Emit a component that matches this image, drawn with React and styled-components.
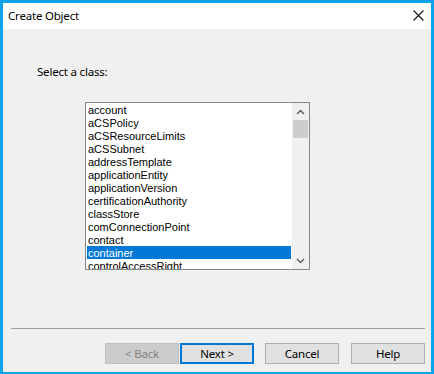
import React from "react";
import styled, { createGlobalStyle } from "styled-components";

const GlobalStyle = createGlobalStyle`
  html, body {
    margin: 0;
    padding: 0;
    background: #f0f0f0;
  }
  * {
    box-sizing: border-box;
  }
`;

const classes = [
  "account",
  "aCSPolicy",
  "aCSResourceLimits",
  "aCSSubnet",
  "addressTemplate",
  "applicationEntity",
  "applicationVersion",
  "certificationAuthority",
  "classStore",
  "comConnectionPoint",
  "contact",
  "container",
  "controlAccessRight",
];

const App = () => {
  return (
    <>
      <GlobalStyle />
      <Window>
        <TitleBar>
          <Title>Create Object</Title>
          <CloseButton>
            <svg width="11" height="11" viewBox="0 0 11 11">
              <path d="M0.5 0.5 L10.5 10.5 M10.5 0.5 L0.5 10.5" stroke="#111" strokeWidth="1.1" />
            </svg>
          </CloseButton>
        </TitleBar>
        <Body>
          <Label>Select a class:</Label>
          <ListBox>
            <Items>
              {classes.map((c) => (
                <Item key={c} selected={c === "container"}>
                  {c}
                </Item>
              ))}
            </Items>
            <ScrollBar>
              <Arrow>
                <svg width="9" height="6" viewBox="0 0 9 6">
                  <path d="M1 5 L4.5 1.5 L8 5" stroke="#606060" strokeWidth="1.5" fill="none" />
                </svg>
              </Arrow>
              <Track>
                <Thumb />
              </Track>
              <Arrow>
                <svg width="9" height="6" viewBox="0 0 9 6">
                  <path d="M1 1 L4.5 4.5 L8 1" stroke="#606060" strokeWidth="1.5" fill="none" />
                </svg>
              </Arrow>
            </ScrollBar>
          </ListBox>
          <Spacer />
          <Separator />
          <ButtonRow>
            <Button disabled>&lt; Back</Button>
            <Button primary>Next &gt;</Button>
            <Button gap={11}>Cancel</Button>
            <Button gap={12}>Help</Button>
          </ButtonRow>
        </Body>
      </Window>
    </>
  );
};

const Window = styled.div`
  width: 434px;
  height: 374px;
  border: 3px solid #0ba3ec;
  border-bottom-width: 2px;
  display: flex;
  flex-direction: column;
  background: #f0f0f0;
  font-family: "Segoe UI", "Noto Sans", sans-serif;
  font-size: 11.5px;
  letter-spacing: -0.2px;
  color: #000;
`;

const TitleBar = styled.div`
  height: 26px;
  background: #fff;
  display: flex;
  align-items: center;
  justify-content: space-between;
  padding: 0 7px 0 5px;
`;

const Title = styled.div`
  line-height: 16px;
  margin-top: -1px;
`;

const CloseButton = styled.div`
  width: 11px;
  height: 11px;
  display: flex;
  margin-top: -1px;
`;

const Body = styled.div`
  flex: 1;
  display: flex;
  flex-direction: column;
  padding: 35px 0 0 0;
`;

const Label = styled.div`
  margin-left: 34px;
  line-height: 16px;
`;

const ListBox = styled.div`
  margin: 22px 0 0 82px;
  width: 225px;
  height: 168px;
  border: 1px solid #828790;
  background: #fff;
  display: flex;
  overflow: hidden;
  letter-spacing: 0;
`;

const Items = styled.div`
  flex: 1;
  padding: 0 1px;
  overflow: hidden;
`;

const Item = styled.div`
  height: 13px;
  line-height: 15px;
  padding-left: 1px;
  font-family: "Liberation Sans", Arial, sans-serif;
  font-size: 11px;
  white-space: nowrap;
  background: ${(p) => (p.selected ? "#0078d7" : "transparent")};
  color: ${(p) => (p.selected ? "#fff" : "#000")};
`;

const ScrollBar = styled.div`
  width: 17px;
  background: #f0f0f0;
  display: flex;
  flex-direction: column;
`;

const Arrow = styled.div`
  height: 17px;
  display: flex;
  align-items: center;
  justify-content: center;
`;

const Track = styled.div`
  flex: 1;
  padding: 0 1px;
`;

const Thumb = styled.div`
  height: 18px;
  background: #cdcdcd;
`;

const Spacer = styled.div`
  flex: 1;
`;

const Separator = styled.div`
  margin: 0 0 14px 8px;
  width: 414px;
  height: 1px;
  background: #a0a0a0;
`;

const ButtonRow = styled.div`
  display: flex;
  padding-left: 102px;
  margin-bottom: 8px;
`;

const Button = styled.button`
  width: 74px;
  height: 21px;
  margin-left: ${(p) => (p.gap ? p.gap : p.primary ? 1 : 0)}px;
  font-family: "Segoe UI", "Noto Sans", sans-serif;
  font-size: 11.5px;
  letter-spacing: -0.2px;
  line-height: 1;
  padding: 0;
  background: ${(p) => (p.disabled ? "#cccccc" : "#e1e1e1")};
  color: ${(p) => (p.disabled ? "#838383" : "#000")};
  border: ${(p) => (p.primary ? "2px solid #0078d7" : p.disabled ? "1px solid #bfbfbf" : "1px solid #adadad")};
  border-radius: 0;
`;

export default App;
